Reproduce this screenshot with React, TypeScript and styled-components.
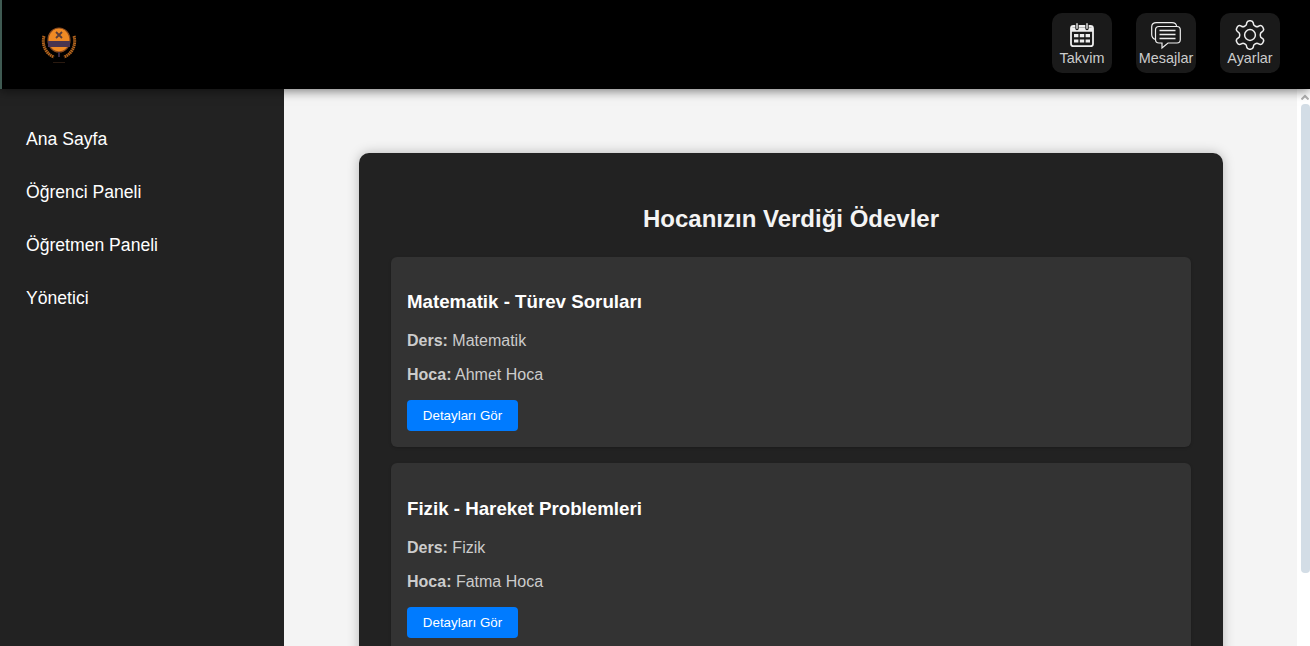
import React from 'react'
import styled, { createGlobalStyle } from 'styled-components'

const GlobalStyle = createGlobalStyle`
  html, body {
    margin: 0;
    height: 100%;
    overflow: hidden;
    font-family: "Liberation Sans", Arial, sans-serif;
  }
  * { box-sizing: border-box; }
`

const Page = styled.div`
  width: 1310px;
  height: 646px;
  display: flex;
  flex-direction: column;
  overflow: hidden;
  background: #f4f4f4;
`

const TopBar = styled.header`
  height: 89px;
  flex: none;
  background: #000;
  border-left: 2px solid #3f5a52;
  display: flex;
  align-items: center;
  justify-content: space-between;
  padding: 0 30px 3px 36px;
  box-shadow: 0 2px 10px rgba(0, 0, 0, 0.5);
  z-index: 2;
`

const Actions = styled.div`
  display: flex;
  gap: 24px;
`

const ActionButton = styled.button`
  width: 60px;
  height: 60px;
  padding: 7px 0 0;
  border: 0;
  border-radius: 10px;
  background: #1a1a1a;
  color: #ccc;
  font: 14.4px "Liberation Sans", Arial, sans-serif;
  display: flex;
  flex-direction: column;
  align-items: center;
  white-space: nowrap;
  svg { display: block; flex: none; }
`

const Body = styled.div`
  flex: 1;
  display: flex;
  min-height: 0;
`

const Sidebar = styled.nav`
  width: 284px;
  flex: none;
  background: #222;
  padding: 40px 0 0 26px;
  display: flex;
  flex-direction: column;
  gap: 33px;
`

const NavLink = styled.a`
  color: #fff;
  font-size: 17.6px;
  line-height: 20px;
`

const Content = styled.main`
  flex: 1;
  display: flex;
  min-width: 0;
`

const Scroll = styled.div`
  flex: 1;
  padding: 64px 74px 0 75px;
  overflow: hidden;
`

const Panel = styled.section`
  width: 864px;
  background: #222;
  border-radius: 10px;
  padding: 52px 32px 32px;
  box-shadow: 0 0 12px rgba(0, 0, 0, 0.25);
`

const Title = styled.h2`
  margin: 0 0 23.5px;
  color: #f4f4f4;
  font-size: 24px;
  line-height: 28px;
  text-align: center;
`

const Card = styled.article`
  background: #333;
  border-radius: 6px;
  padding: 16px;
  margin-bottom: 16px;
  box-shadow: 0 1px 3px rgba(0, 0, 0, 0.2);
`

const CardTitle = styled.h3`
  margin: 18.72px 0 19.1px;
  color: #fff;
  font-size: 18.72px;
  line-height: 21.56px;
`

const Meta = styled.p`
  margin: 0 0 16px;
  color: #ccc;
  font-size: 16px;
  line-height: 18.2px;
`

const DetailButton = styled.button`
  display: block;
  width: 111px;
  height: 31px;
  border: 0;
  border-radius: 4px;
  background: #007bff;
  color: #fff;
  font: 13.33px "Liberation Sans", Arial, sans-serif;
`

const ScrollBar = styled.div`
  width: 13px;
  flex: none;
  background: #fff;
  display: flex;
  flex-direction: column;
  align-items: flex-start;
  padding: 5px 0 0 4px;
`

const ScrollArrow = styled.svg`
  display: block;
`

const ScrollThumb = styled.div`
  width: 9px;
  height: 469px;
  margin-top: 4px;
  border-radius: 4px;
  background: #d3dde6;
`

const CalendarIcon = () => (
  <svg width="30" height="30" viewBox="0 0 30 30" fill="none" stroke="#eee" strokeWidth="1.8">
    <rect x="4" y="6" width="22" height="20.200" rx="2.500" />
    <path d="M4 9.500h22" strokeWidth="4.500" />
    <path d="M10 3.500v5M20 3.500v5" stroke="#1a1a1a" strokeWidth="3.400" strokeLinecap="round" />
    <path d="M10 3.800v4.500M20 3.800v4.500" strokeWidth="1.400" strokeLinecap="round" />
    <path
      d="M7 14h4.400v3.200H7zM12.800 14h4.400v3.200h-4.400zM18.600 14H23v3.200h-4.400zM7 19.400h4.400v3.200H7zM12.800 19.400h4.400v3.200h-4.400zM18.600 19.400H23v3.200h-4.400z"
      fill="#eee"
      stroke="none"
    />
  </svg>
)

const MessagesIcon = () => (
  <svg width="30" height="30" viewBox="0 0 30 30" fill="none" stroke="#eee" strokeWidth="1.200">
    <path d="M4.500 19.500C1.800 18.500.7 16.500.7 14.500V7C.7 4.200 3 2.700 5.500 2.700H21c2.500 0 4.300 1.300 4.700 3.800" />
    <path d="M8 6.500h18c2 0 3.300 1.500 3.300 3.500v9.500c0 2-1.300 3.500-3.300 3.500h-9l-6 5v-5H8c-2 0-3.500-1.500-3.500-3.500V10c0-2 1.500-3.500 3.500-3.500z" />
    <path d="M8.500 10.500h16M8.500 14.500h16M8.500 18.500h16" strokeWidth="1.500" />
  </svg>
)

const GearIcon = () => (
  <svg width="30" height="30" viewBox="2 2 20 20" fill="none" stroke="#eee" strokeWidth="1">
    <path d="M12.220 2.500h-.44a2 2 0 0 0-2 1.500v.18a2 2 0 0 1-1 1.730l-.43.250a2 2 0 0 1-2 0l-.150-.080a2 2 0 0 0-2.730.730l-.220.380a2 2 0 0 0 .730 2.730l.150.100a2 2 0 0 1 1 1.720v.510a2 2 0 0 1-1 1.740l-.150.090a2 2 0 0 0-.730 2.730l.220.380a2 2 0 0 0 2.730.730l.150-.080a2 2 0 0 1 2 0l.430.250a2 2 0 0 1 1 1.730V20a2 2 0 0 0 2 1.500h.44a2 2 0 0 0 2-1.500v-.18a2 2 0 0 1 1-1.730l.430-.250a2 2 0 0 1 2 0l.150.080a2 2 0 0 0 2.730-.730l.220-.390a2 2 0 0 0-.730-2.730l-.150-.080a2 2 0 0 1-1-1.740v-.500a2 2 0 0 1 1-1.740l.150-.090a2 2 0 0 0 .730-2.730l-.220-.380a2 2 0 0 0-2.730-.730l-.150.080a2 2 0 0 1-2 0l-.430-.250a2 2 0 0 1-1-1.730V4a2 2 0 0 0-2-1.500z" />
    <circle cx="12" cy="12" r="3.600" />
  </svg>
)

const Logo = () => (
  <svg width="42" height="42" viewBox="0 -1 42 42">
    <path d="M6 13C3.500 22 8 31 16 34M36 13C38.500 22 34 31 26 34" fill="none" stroke="#b5651d" strokeWidth="3" strokeDasharray="1.600 0.500" />
    <ellipse cx="21" cy="17" rx="11" ry="12" fill="#f08a24" stroke="#8a4b20" strokeWidth="1.200" />
    <rect x="10" y="18" width="22" height="6" fill="#4a3550" />
    <path d="M18 9l6 6M24 9l-6 6" stroke="#5a3d3a" strokeWidth="1.800" />
    <rect x="20" y="29" width="2" height="5" fill="#3a2a40" />
    <rect x="15" y="39" width="12" height="1" fill="#2a1a10" />
  </svg>
)

const homeworks = [
  { title: 'Matematik - Türev Soruları', lesson: 'Matematik', teacher: 'Ahmet Hoca' },
  { title: 'Fizik - Hareket Problemleri', lesson: 'Fizik', teacher: 'Fatma Hoca' },
]

const App = () => (
  <Page>
    <GlobalStyle />
    <TopBar>
      <Logo />
      <Actions>
        <ActionButton>
          <CalendarIcon />
          Takvim
        </ActionButton>
        <ActionButton>
          <MessagesIcon />
          Mesajlar
        </ActionButton>
        <ActionButton>
          <GearIcon />
          Ayarlar
        </ActionButton>
      </Actions>
    </TopBar>
    <Body>
      <Sidebar>
        <NavLink>Ana Sayfa</NavLink>
        <NavLink>Öğrenci Paneli</NavLink>
        <NavLink>Öğretmen Paneli</NavLink>
        <NavLink>Yönetici</NavLink>
      </Sidebar>
      <Content>
        <Scroll>
          <Panel>
            <Title>Hocanızın Verdiği Ödevler</Title>
            {homeworks.map((h) => (
              <Card key={h.title}>
                <CardTitle>{h.title}</CardTitle>
                <Meta>
                  <strong>Ders:</strong> {h.lesson}
                </Meta>
                <Meta>
                  <strong>Hoca:</strong> {h.teacher}
                </Meta>
                <DetailButton>Detayları Gör</DetailButton>
              </Card>
            ))}
          </Panel>
        </Scroll>
        <ScrollBar>
          <ScrollArrow width="8" height="6" viewBox="0 0 8 6" fill="none" stroke="#b0b0b0" strokeWidth="2">
            <path d="M.5 5.500L4 2l3.500 3.500" />
          </ScrollArrow>
          <ScrollThumb />
        </ScrollBar>
      </Content>
    </Body>
  </Page>
)

export default App
